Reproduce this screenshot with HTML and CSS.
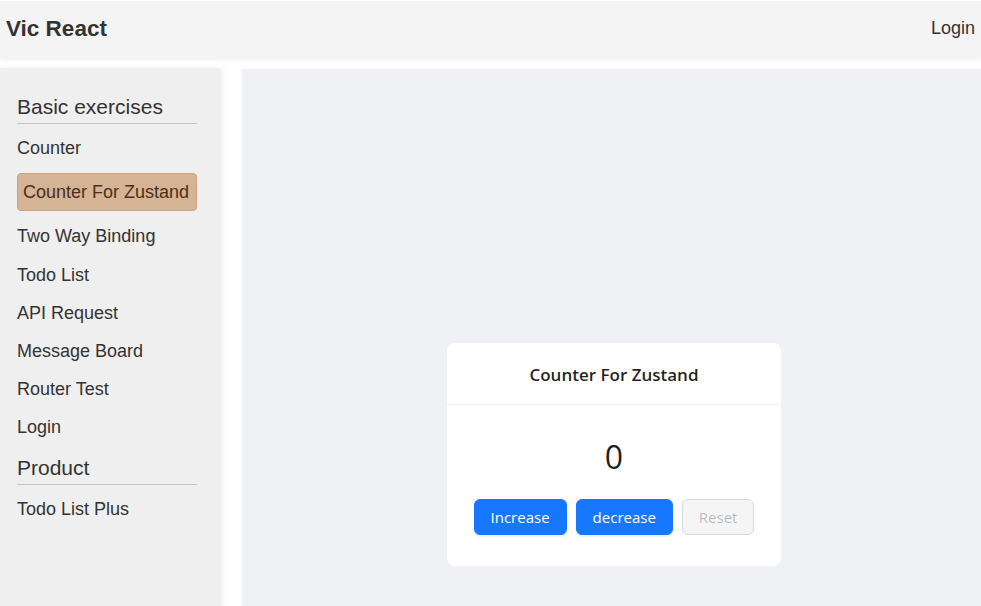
FILE: index.html
```html
<!DOCTYPE html>
<html lang="en">
<head>
<meta charset="utf-8">
<title>Vic React</title>
<link rel="stylesheet" href="styles.css">
</head>
<body>
<header class="topbar">
  <div class="brand">Vic React</div>
  <a class="top-login" href="#">Login</a>
</header>
<div class="layout">
  <aside class="sidebar">
    <h3 class="group-title">Basic exercises</h3>
    <nav class="group">
      <a class="nav-item" href="#">Counter</a>
      <a class="nav-item active" href="#">Counter For Zustand</a>
      <a class="nav-item" href="#">Two Way Binding</a>
      <a class="nav-item" href="#">Todo List</a>
      <a class="nav-item" href="#">API Request</a>
      <a class="nav-item" href="#">Message Board</a>
      <a class="nav-item" href="#">Router Test</a>
      <a class="nav-item" href="#">Login</a>
    </nav>
    <h3 class="group-title">Product</h3>
    <nav class="group">
      <a class="nav-item" href="#">Todo List Plus</a>
    </nav>
  </aside>
  <main class="main">
    <section class="card">
      <div class="card-head">Counter For Zustand</div>
      <div class="card-body">
        <div class="count">0</div>
        <div class="actions">
          <button class="btn primary">Increase</button>
          <button class="btn primary">decrease</button>
          <button class="btn" disabled>Reset</button>
        </div>
      </div>
    </section>
  </main>
</div>
</body>
</html>
```
FILE: styles.css
```css
html, body {
  margin: 0;
  padding: 0;
  overflow: hidden;
  background: #ffffff;
}
body {
  font-family: "Liberation Sans", Arial, sans-serif;
  color: #333333;
}
a { text-decoration: none; color: inherit; }

.topbar {
  height: 57px;
  margin-top: 1px;
  background: #f4f4f4;
  box-shadow: 0 2px 4px rgba(0, 0, 0, 0.06);
  display: flex;
  align-items: center;
  justify-content: space-between;
  padding: 0 6px;
  position: relative;
  z-index: 2;
}
.brand {
  font-size: 22.5px;
  font-weight: bold;
  color: #333333;
  margin-top: -2px;
}
.top-login {
  font-size: 18px;
  color: #333333;
  margin-top: -2px;
}

.layout {
  display: flex;
  gap: 21px;
  margin-top: 10px;
  height: 770px;
}
.sidebar {
  width: 180px;
  flex: 0 0 180px;
  background: #efefef;
  padding: 23px 24px 0 17px;
  box-shadow: 2px 0 6px rgba(0, 0, 0, 0.06);
  border-radius: 0 3px 0 0;
}
.group-title {
  margin: 4px 0 0;
  font-size: 21px;
  font-weight: normal;
  line-height: 24px;
  padding-bottom: 4px;
  border-bottom: 1px solid #c4c4c4;
  color: #333333;
}
.group {
  display: flex;
  flex-direction: column;
  gap: 12.2px;
  padding: 11px 0 12px;
}
.nav-item {
  font-size: 18px;
  line-height: 26px;
  color: #333333;
}
.nav-item.active {
  background: #d5b496;
  border: 1px solid #c9a27f;
  border-radius: 4px;
  padding: 5px 5px;
  color: #4a2f18;
}

.main {
  flex: 1;
  background: #f0f1f5;
  margin-top: 1px;
  display: flex;
  align-items: center;
  justify-content: center;
  padding-left: 5px;
  padding-top: 2px;
}
.card {
  width: 334px;
  background: #ffffff;
  border-radius: 8px;
  font-family: "Open Sans", "Noto Sans", sans-serif;
  color: rgba(0, 0, 0, 0.88);
}
.card-head {
  height: 62px;
  border-bottom: 1px solid #f0f0f0;
  display: flex;
  align-items: center;
  justify-content: center;
  font-size: 17px;
  font-weight: 600;
  padding-top: 1px;
  box-sizing: border-box;
}
.card-body {
  padding: 32px 24px 31px;
  text-align: center;
}
.count {
  font-size: 32px;
  line-height: 40px;
}
.actions {
  margin-top: 22px;
  display: flex;
  justify-content: center;
  gap: 9px;
}
.btn {
  height: 36px;
  padding: 0 16px;
  font-family: "Open Sans", "Noto Sans", sans-serif;
  font-size: 15px;
  border-radius: 6px;
  border: 1px solid #d9d9d9;
  background: #f5f5f5;
  color: rgba(0, 0, 0, 0.25);
}
.btn.primary {
  background: #1677ff;
  border-color: #1677ff;
  color: #ffffff;
  box-shadow: 0 2px 0 rgba(5, 145, 255, 0.1);
}
```
